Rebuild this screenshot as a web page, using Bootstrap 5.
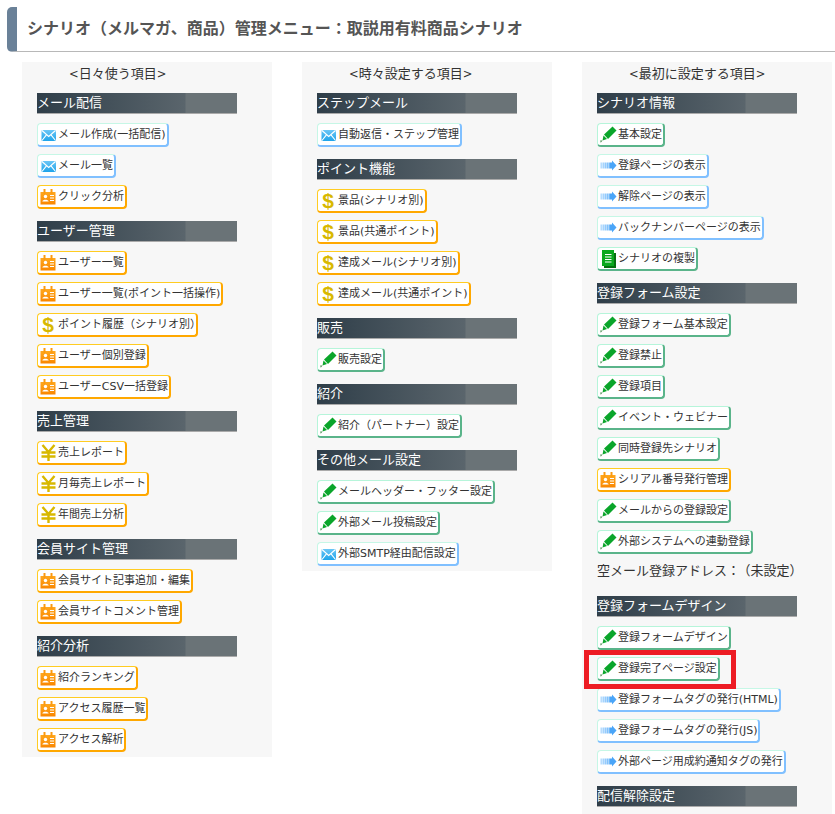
<!DOCTYPE html>
<html lang="ja">
<head>
<meta charset="utf-8">
<title>シナリオ管理メニュー</title>
<link rel="stylesheet" href="https://cdn.jsdelivr.net/npm/bootstrap@5.3.0/dist/css/bootstrap.min.css">
<style>
html,body{height:814px;overflow:hidden;background:#fff}
body{font-family:"DejaVu Sans","Noto Sans CJK JP",sans-serif;color:#333;font-size:13px}
.page-title{margin:7px 0 0 7px;height:45px;padding-left:10px;border-left:10px solid #6a8198;border-bottom:1px solid #b8b8b8;border-radius:5px 0 0 5px;font-family:"Noto Sans CJK JP",sans-serif;font-size:16px;font-weight:700;color:#555;line-height:41px;white-space:nowrap}
.columns{margin:10px 0 0 22px;gap:30px}
.panel{width:250px;background:#f7f7f7;padding:0 15px;align-self:flex-start}
.panel-last{height:760px}
.panel-title{height:31px;line-height:22px;padding-left:32px;font-family:"Noto Sans CJK JP",sans-serif;font-size:13px;white-space:pre}
.bk{font-family:"DejaVu Sans",sans-serif;font-size:11.5px}
.sec-head{width:200px;height:21px;line-height:18px;border-bottom:1px solid #aaa;background:linear-gradient(90deg,#2f3e49 0%,#5a656c 74%,#6a7377 74.5%,#6a7377 100%);color:#fff;font-family:"Noto Sans CJK JP",sans-serif;font-size:13px;margin:12px 0 9px;white-space:nowrap}
.sec-head.first{margin-top:0}
.item{margin-bottom:7px;height:24px}
.item:last-child{margin-bottom:5px}
.mbtn{height:24px;background:#fff;border-style:solid;border-width:1px 2px 2px 1px;border-radius:4px;font-size:11px;color:#333;line-height:1;white-space:nowrap;padding-right:1px;text-decoration:none}
.mbtn:hover{color:#333}
.b-blue{border-color:#c6f7e6 #80c0ff #80c0ff #c6f7e6}
.b-orange{border-color:#ffcc22 #ffa800 #ffa800 #ffcc22}
.b-green{border-color:#b6f5da #5ab48a #5ab48a #b6f5da}
.ico{width:20px;height:21px;flex:none}
.ico svg{display:block;width:20px;height:21px}
.glyph{width:20px;text-align:center;flex:none;font-family:"Liberation Sans",sans-serif;font-weight:700;color:#d8b800;line-height:21px;font-size:21px}
.end-trim{margin-right:-6px}
.mail-addr{margin:-1px 0 17px;height:19px;line-height:20px;font-family:"Noto Sans CJK JP",sans-serif;font-size:13px;white-space:nowrap}
.addr-gap{margin-left:4px}
.red-frame{left:-13px;top:-7px;width:152px;height:39px;border:5px solid #ed1c24;pointer-events:none}
</style>
</head>
<body>
<svg width="0" height="0" class="position-absolute">
<defs>
<linearGradient id="gm" x1="0" y1="0" x2="0" y2="1"><stop offset="0" stop-color="#6cc6f6"/><stop offset="1" stop-color="#1ea4ea"/></linearGradient>
<linearGradient id="go" x1="0" y1="0" x2="0" y2="1"><stop offset="0" stop-color="#ffa81e"/><stop offset="1" stop-color="#f98600"/></linearGradient>
<linearGradient id="ga" gradientUnits="userSpaceOnUse" x1="2" y1="0" x2="12" y2="0"><stop offset="0" stop-color="#b4dcff"/><stop offset="1" stop-color="#4aa5f8"/></linearGradient>
<symbol id="i-mail" viewBox="0 0 20 21"><rect x="3.500" y="6" width="14.500" height="11" rx="1" fill="url(#gm)"/><path d="M4 6.500 10.700 12.500 17.500 6.500M4 16.500 8.600 10.600M17.500 16.500 12.800 10.600" fill="none" stroke="#fff" stroke-width="1.100"/></symbol>
<symbol id="i-badge" viewBox="0 0 20 21"><rect x="2.500" y="6" width="15" height="12.500" fill="url(#go)"/><rect x="5.500" y="3" width="2" height="5" fill="#fb9a10"/><rect x="12.500" y="3" width="2" height="5" fill="#fb9a10"/><circle cx="7.500" cy="10.500" r="1.700" fill="#fff"/><path d="M4.300 15.500c.3-2.400 6-2.400 6.400 0z" fill="#fff"/><path d="M12 9.500h4M12 12h4M12 14.500h4" stroke="#fff" stroke-width="1.200"/></symbol>
<symbol id="i-pen" viewBox="0 0 20 21"><path d="M6 10.500 14.500 2.500 18.500 6.500 10 15z" fill="#0aa52a"/><path d="M5.500 11.500 9 15 4.500 16.500z" fill="#0aa52a"/><path d="M2.200 16.500 4.500 16.500 2.700 18.700z" fill="#4a8a50"/></symbol>
<symbol id="i-arrow" viewBox="0 0 20 21"><path d="M2.500 7.500h1.300v6H2.500zM4.500 7.500h1.300v6H4.500zM6.500 7.500h1.300v6H6.500zM8.500 7.500h1.300v6H8.500zM10.500 7.500h1.300v6h-1.300z" fill="url(#ga)"/><path d="M12 7.500h2V5.500l4.500 5-4.500 5v-2h-2z" fill="#4aa5f8"/></symbol>
<symbol id="i-doc" viewBox="0 0 20 21"><rect x="6" y="5" width="12" height="15" fill="#06700f"/><rect x="4" y="2" width="12" height="16" fill="#0ba81e"/><path d="M7 6.500h6.500M7 9h6.500M7 11.500h6.500M7 14h6.500" stroke="#fff" stroke-width="1.200"/></symbol>
<symbol id="i-yen" viewBox="0 0 20 21"><path d="M4.500 3 10.500 10 16.500 3M10.500 10V19M3.500 10.500H17.500M3.500 14.500H17.500" fill="none" stroke="#d8b800" stroke-width="2.400"/></symbol>
</defs>
</svg>

<div class="page-title">シナリオ（メルマガ、商品）管理メニュー：取説用有料商品シナリオ</div>

<div class="columns d-flex">
  <div class="panel">
    <div class="panel-title"><span class="bk">&lt;</span>日々使う項目<span class="bk">&gt;</span></div>
    <div class="sec-head first">メール配信</div>
    <div class="item"><a href="#" class="mbtn b-blue d-inline-flex align-items-center"><span class="ico"><svg><use href="#i-mail"/></svg></span>メール作成(一括配信)</a></div>
    <div class="item"><a href="#" class="mbtn b-blue d-inline-flex align-items-center"><span class="ico"><svg><use href="#i-mail"/></svg></span>メール一覧</a></div>
    <div class="item"><a href="#" class="mbtn b-orange d-inline-flex align-items-center"><span class="ico"><svg><use href="#i-badge"/></svg></span>クリック分析</a></div>
    <div class="sec-head">ユーザー管理</div>
    <div class="item"><a href="#" class="mbtn b-orange d-inline-flex align-items-center"><span class="ico"><svg><use href="#i-badge"/></svg></span>ユーザー一覧</a></div>
    <div class="item"><a href="#" class="mbtn b-orange d-inline-flex align-items-center"><span class="ico"><svg><use href="#i-badge"/></svg></span>ユーザー一覧(ポイント一括操作)</a></div>
    <div class="item"><a href="#" class="mbtn b-orange d-inline-flex align-items-center"><span class="glyph">$</span><span class="end-trim">ポイント履歴（シナリオ別）</span></a></div>
    <div class="item"><a href="#" class="mbtn b-orange d-inline-flex align-items-center"><span class="ico"><svg><use href="#i-badge"/></svg></span>ユーザー個別登録</a></div>
    <div class="item"><a href="#" class="mbtn b-orange d-inline-flex align-items-center"><span class="ico"><svg><use href="#i-badge"/></svg></span>ユーザーCSV一括登録</a></div>
    <div class="sec-head">売上管理</div>
    <div class="item"><a href="#" class="mbtn b-orange d-inline-flex align-items-center"><span class="ico"><svg><use href="#i-yen"/></svg></span>売上レポート</a></div>
    <div class="item"><a href="#" class="mbtn b-orange d-inline-flex align-items-center"><span class="ico"><svg><use href="#i-yen"/></svg></span>月毎売上レポート</a></div>
    <div class="item"><a href="#" class="mbtn b-orange d-inline-flex align-items-center"><span class="ico"><svg><use href="#i-yen"/></svg></span>年間売上分析</a></div>
    <div class="sec-head">会員サイト管理</div>
    <div class="item"><a href="#" class="mbtn b-orange d-inline-flex align-items-center"><span class="ico"><svg><use href="#i-badge"/></svg></span>会員サイト記事追加・編集</a></div>
    <div class="item"><a href="#" class="mbtn b-orange d-inline-flex align-items-center"><span class="ico"><svg><use href="#i-badge"/></svg></span>会員サイトコメント管理</a></div>
    <div class="sec-head">紹介分析</div>
    <div class="item"><a href="#" class="mbtn b-orange d-inline-flex align-items-center"><span class="ico"><svg><use href="#i-badge"/></svg></span>紹介ランキング</a></div>
    <div class="item"><a href="#" class="mbtn b-orange d-inline-flex align-items-center"><span class="ico"><svg><use href="#i-badge"/></svg></span>アクセス履歴一覧</a></div>
    <div class="item"><a href="#" class="mbtn b-orange d-inline-flex align-items-center"><span class="ico"><svg><use href="#i-badge"/></svg></span>アクセス解析</a></div>
  </div>

  <div class="panel">
    <div class="panel-title"><span class="bk">&lt;</span>時々設定する項目<span class="bk">&gt;</span></div>
    <div class="sec-head first">ステップメール</div>
    <div class="item"><a href="#" class="mbtn b-blue d-inline-flex align-items-center"><span class="ico"><svg><use href="#i-mail"/></svg></span>自動返信・ステップ管理</a></div>
    <div class="sec-head">ポイント機能</div>
    <div class="item"><a href="#" class="mbtn b-orange d-inline-flex align-items-center"><span class="glyph">$</span>景品(シナリオ別)</a></div>
    <div class="item"><a href="#" class="mbtn b-orange d-inline-flex align-items-center"><span class="glyph">$</span>景品(共通ポイント)</a></div>
    <div class="item"><a href="#" class="mbtn b-orange d-inline-flex align-items-center"><span class="glyph">$</span>達成メール(シナリオ別)</a></div>
    <div class="item"><a href="#" class="mbtn b-orange d-inline-flex align-items-center"><span class="glyph">$</span>達成メール(共通ポイント)</a></div>
    <div class="sec-head">販売</div>
    <div class="item"><a href="#" class="mbtn b-green d-inline-flex align-items-center"><span class="ico"><svg><use href="#i-pen"/></svg></span>販売設定</a></div>
    <div class="sec-head">紹介</div>
    <div class="item"><a href="#" class="mbtn b-green d-inline-flex align-items-center"><span class="ico"><svg><use href="#i-pen"/></svg></span>紹介（パートナー）設定</a></div>
    <div class="sec-head">その他メール設定</div>
    <div class="item"><a href="#" class="mbtn b-green d-inline-flex align-items-center"><span class="ico"><svg><use href="#i-pen"/></svg></span>メールヘッダー・フッター設定</a></div>
    <div class="item"><a href="#" class="mbtn b-green d-inline-flex align-items-center"><span class="ico"><svg><use href="#i-pen"/></svg></span>外部メール投稿設定</a></div>
    <div class="item"><a href="#" class="mbtn b-blue d-inline-flex align-items-center"><span class="ico"><svg><use href="#i-mail"/></svg></span>外部SMTP経由配信設定</a></div>
  </div>

  <div class="panel panel-last">
    <div class="panel-title"><span class="bk">&lt;</span>最初に設定する項目<span class="bk">&gt;</span></div>
    <div class="sec-head first">シナリオ情報</div>
    <div class="item"><a href="#" class="mbtn b-green d-inline-flex align-items-center"><span class="ico"><svg><use href="#i-pen"/></svg></span>基本設定</a></div>
    <div class="item"><a href="#" class="mbtn b-blue d-inline-flex align-items-center"><span class="ico"><svg><use href="#i-arrow"/></svg></span>登録ページの表示</a></div>
    <div class="item"><a href="#" class="mbtn b-blue d-inline-flex align-items-center"><span class="ico"><svg><use href="#i-arrow"/></svg></span>解除ページの表示</a></div>
    <div class="item"><a href="#" class="mbtn b-blue d-inline-flex align-items-center"><span class="ico"><svg><use href="#i-arrow"/></svg></span>バックナンバーページの表示</a></div>
    <div class="item"><a href="#" class="mbtn b-green d-inline-flex align-items-center"><span class="ico"><svg><use href="#i-doc"/></svg></span>シナリオの複製</a></div>
    <div class="sec-head">登録フォーム設定</div>
    <div class="item"><a href="#" class="mbtn b-green d-inline-flex align-items-center"><span class="ico"><svg><use href="#i-pen"/></svg></span>登録フォーム基本設定</a></div>
    <div class="item"><a href="#" class="mbtn b-green d-inline-flex align-items-center"><span class="ico"><svg><use href="#i-pen"/></svg></span>登録禁止</a></div>
    <div class="item"><a href="#" class="mbtn b-green d-inline-flex align-items-center"><span class="ico"><svg><use href="#i-pen"/></svg></span>登録項目</a></div>
    <div class="item"><a href="#" class="mbtn b-green d-inline-flex align-items-center"><span class="ico"><svg><use href="#i-pen"/></svg></span>イベント・ウェビナー</a></div>
    <div class="item"><a href="#" class="mbtn b-green d-inline-flex align-items-center"><span class="ico"><svg><use href="#i-pen"/></svg></span>同時登録先シナリオ</a></div>
    <div class="item"><a href="#" class="mbtn b-orange d-inline-flex align-items-center"><span class="ico"><svg><use href="#i-badge"/></svg></span>シリアル番号発行管理</a></div>
    <div class="item"><a href="#" class="mbtn b-green d-inline-flex align-items-center"><span class="ico"><svg><use href="#i-pen"/></svg></span>メールからの登録設定</a></div>
    <div class="item"><a href="#" class="mbtn b-green d-inline-flex align-items-center"><span class="ico"><svg><use href="#i-pen"/></svg></span>外部システムへの連動登録</a></div>
    <div class="mail-addr">空メール登録アドレス：<span class="addr-gap">（未設定）</span></div>
    <div class="sec-head first">登録フォームデザイン</div>
    <div class="item"><a href="#" class="mbtn b-green d-inline-flex align-items-center"><span class="ico"><svg><use href="#i-pen"/></svg></span>登録フォームデザイン</a></div>
    <div class="item position-relative"><a href="#" class="mbtn b-green d-inline-flex align-items-center"><span class="ico"><svg><use href="#i-pen"/></svg></span>登録完了ページ設定</a><div class="red-frame position-absolute"></div></div>
    <div class="item"><a href="#" class="mbtn b-blue d-inline-flex align-items-center"><span class="ico"><svg><use href="#i-arrow"/></svg></span>登録フォームタグの発行(HTML)</a></div>
    <div class="item"><a href="#" class="mbtn b-blue d-inline-flex align-items-center"><span class="ico"><svg><use href="#i-arrow"/></svg></span>登録フォームタグの発行(JS)</a></div>
    <div class="item"><a href="#" class="mbtn b-blue d-inline-flex align-items-center"><span class="ico"><svg><use href="#i-arrow"/></svg></span>外部ページ用成約通知タグの発行</a></div>
    <div class="sec-head">配信解除設定</div>
  </div>
</div>

<script src="https://cdn.jsdelivr.net/npm/bootstrap@5.3.0/dist/js/bootstrap.bundle.min.js"></script>
</body>
</html>
